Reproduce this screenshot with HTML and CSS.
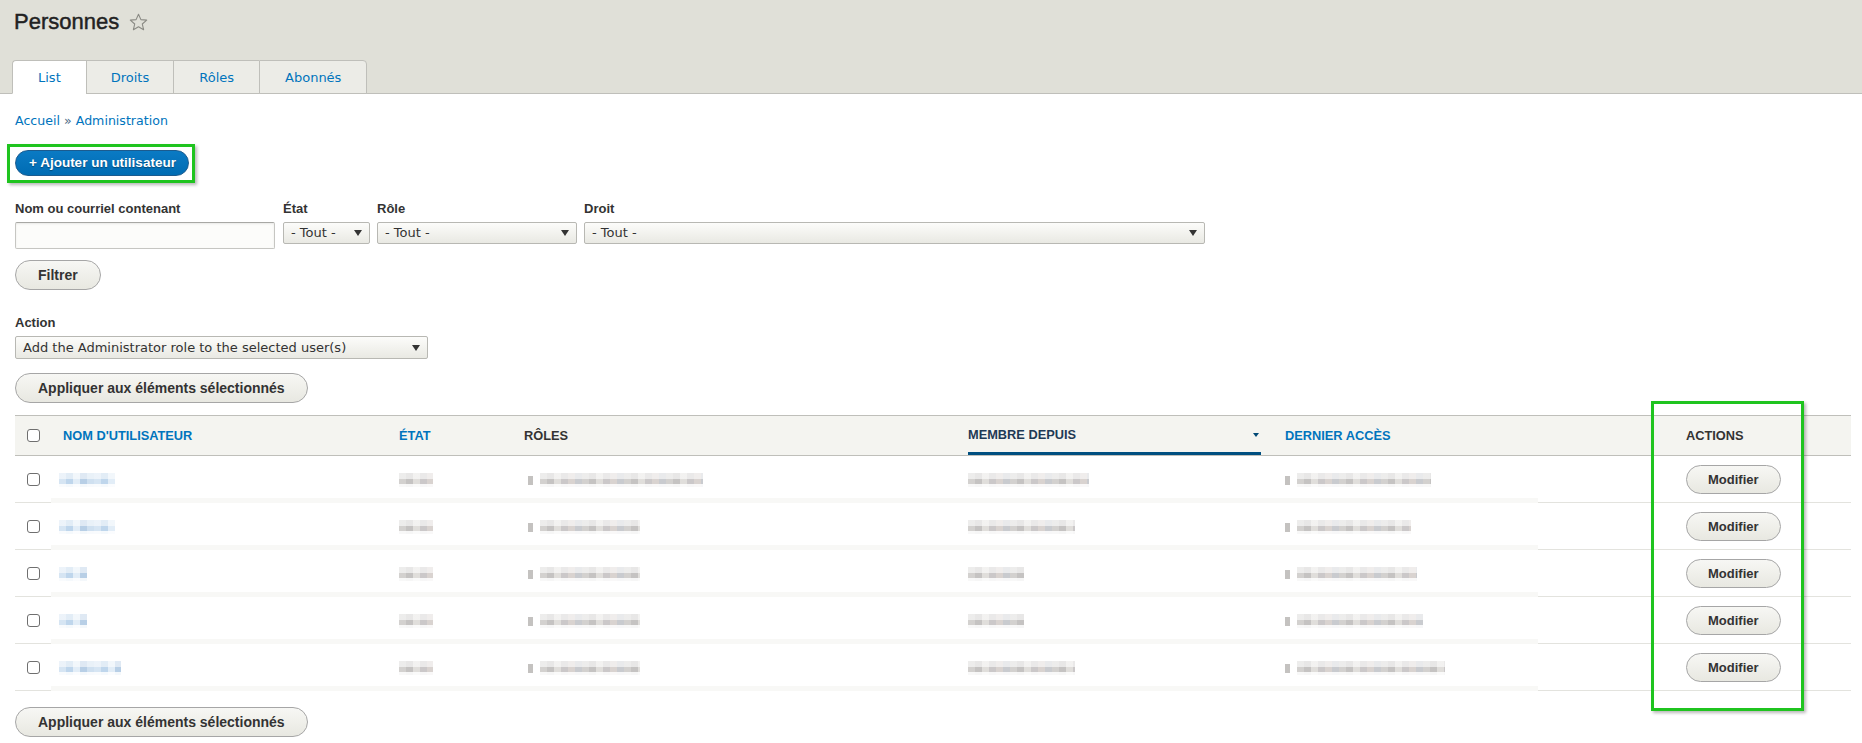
FILE: index.html
```html
<!DOCTYPE html>
<html lang="fr">
<head>
<meta charset="utf-8">
<title>Personnes</title>
<link rel="stylesheet" href="styles.css">
</head>
<body>
<header class="page-header">
  <h1 class="page-title"><span>Personnes</span>
    <svg class="star" width="19" height="18" viewBox="0 0 19 18" aria-hidden="true"><path d="M9.5 1.2 L11.9 6.6 L17.7 7.1 L13.3 11 L14.6 16.7 L9.5 13.7 L4.4 16.7 L5.7 11 L1.3 7.1 L7.1 6.6 Z" fill="none" stroke="#8a8a84" stroke-width="1.1" stroke-linejoin="round"/></svg>
  </h1>
  <ul class="tabs">
    <li class="tab is-active"><a href="#">List</a></li>
    <li class="tab"><a href="#">Droits</a></li>
    <li class="tab"><a href="#">Rôles</a></li>
    <li class="tab"><a href="#">Abonnés</a></li>
  </ul>
</header>

<main class="content">
  <nav class="breadcrumb"><a href="#">Accueil</a> <span class="sep">»</span> <a href="#">Administration</a></nav>

  <div class="action-links"><a href="#" class="button button--primary">+ Ajouter un utilisateur</a></div>

  <form class="filters">
    <div class="form-item">
      <label class="form-label">Nom ou courriel contenant</label>
      <input type="text" class="form-text">
    </div>
    <div class="form-item">
      <label class="form-label">État</label>
      <span class="select-wrap w-etat"><select class="form-select"><option>- Tout -</option></select></span>
    </div>
    <div class="form-item">
      <label class="form-label">Rôle</label>
      <span class="select-wrap w-role"><select class="form-select"><option>- Tout -</option></select></span>
    </div>
    <div class="form-item">
      <label class="form-label">Droit</label>
      <span class="select-wrap w-droit"><select class="form-select"><option>- Tout -</option></select></span>
    </div>
  </form>
  <div class="form-actions"><button type="button" class="button">Filtrer</button></div>

  <div class="bulk">
    <label class="form-label">Action</label>
    <span class="select-wrap w-action"><select class="form-select tall"><option>Add the Administrator role to the selected user(s)</option></select></span>
  </div>
  <div class="apply"><button type="button" class="button">Appliquer aux éléments sélectionnés</button></div>

  <table class="users">
    <colgroup>
      <col class="c-chk"><col class="c-name"><col class="c-etat"><col class="c-roles"><col class="c-membre"><col class="c-dernier"><col class="c-actions">
    </colgroup>
    <thead>
      <tr>
        <th class="chk"><input type="checkbox" class="cb"></th>
        <th><a href="#">Nom d'utilisateur</a></th>
        <th><a href="#">État</a></th>
        <th>Rôles</th>
        <th class="is-active"><a href="#" class="sort-link"><span>Membre depuis</span><span class="sort-arrow"></span></a></th>
        <th><a href="#">Dernier accès</a></th>
        <th>Actions</th>
      </tr>
    </thead>
    <tbody>
      <tr>
        <td class="chk"><input type="checkbox" class="cb"></td>
        <td class="mid"><span class="px px-blue name" style="width:56px"></span></td>
        <td class="mid"><span class="px px-gray" style="width:34px"></span></td>
        <td class="mid"><span class="dot roles-dot"></span><span class="px px-gray" style="width:163px"></span></td>
        <td class="mid"><span class="px px-gray" style="width:121px"></span></td>
        <td class="mid last"><span class="dot"></span><span class="px px-gray" style="width:134px"></span></td>
        <td class="act"><button type="button" class="button small">Modifier</button></td>
      </tr>
      <tr>
        <td class="chk"><input type="checkbox" class="cb"></td>
        <td class="mid"><span class="px px-blue name" style="width:56px"></span></td>
        <td class="mid"><span class="px px-gray" style="width:34px"></span></td>
        <td class="mid"><span class="dot roles-dot"></span><span class="px px-gray" style="width:100px"></span></td>
        <td class="mid"><span class="px px-gray" style="width:107px"></span></td>
        <td class="mid last"><span class="dot"></span><span class="px px-gray" style="width:114px"></span></td>
        <td class="act"><button type="button" class="button small">Modifier</button></td>
      </tr>
      <tr>
        <td class="chk"><input type="checkbox" class="cb"></td>
        <td class="mid"><span class="px px-blue name" style="width:28px"></span></td>
        <td class="mid"><span class="px px-gray" style="width:34px"></span></td>
        <td class="mid"><span class="dot roles-dot"></span><span class="px px-gray" style="width:100px"></span></td>
        <td class="mid"><span class="px px-gray" style="width:56px"></span></td>
        <td class="mid last"><span class="dot"></span><span class="px px-gray" style="width:120px"></span></td>
        <td class="act"><button type="button" class="button small">Modifier</button></td>
      </tr>
      <tr>
        <td class="chk"><input type="checkbox" class="cb"></td>
        <td class="mid"><span class="px px-blue name" style="width:28px"></span></td>
        <td class="mid"><span class="px px-gray" style="width:34px"></span></td>
        <td class="mid"><span class="dot roles-dot"></span><span class="px px-gray" style="width:100px"></span></td>
        <td class="mid"><span class="px px-gray" style="width:56px"></span></td>
        <td class="mid last"><span class="dot"></span><span class="px px-gray" style="width:126px"></span></td>
        <td class="act"><button type="button" class="button small">Modifier</button></td>
      </tr>
      <tr>
        <td class="chk"><input type="checkbox" class="cb"></td>
        <td class="mid"><span class="px px-blue name" style="width:62px"></span></td>
        <td class="mid"><span class="px px-gray" style="width:34px"></span></td>
        <td class="mid"><span class="dot roles-dot"></span><span class="px px-gray" style="width:100px"></span></td>
        <td class="mid"><span class="px px-gray" style="width:107px"></span></td>
        <td class="mid last"><span class="dot"></span><span class="px px-gray" style="width:148px"></span></td>
        <td class="act"><button type="button" class="button small">Modifier</button></td>
      </tr>
    </tbody>
  </table>

  <div class="apply bottom"><button type="button" class="button">Appliquer aux éléments sélectionnés</button></div>
</main>

<div class="highlight hl-add"></div>
<div class="highlight hl-actions"></div>
</body>
</html>
```

FILE: styles.css
```css
* { box-sizing: border-box; }
html, body { margin: 0; padding: 0; }
body {
  position: relative;
  width: 1862px;
  min-height: 743px;
  overflow: hidden;
  background: #fff;
  color: #333;
  font-family: "DejaVu Sans", Verdana, sans-serif;
  font-size: 13px;
}
a { color: #0074bd; text-decoration: none; }

/* Header */
.page-header {
  background: #e0e0d8;
  padding: 9px 0 0 12px;
  border-bottom: 1px solid #bfbfba;
}
.page-title {
  margin: 0 0 25px;
  padding-left: 2px;
  display: flex;
  align-items: center;
  gap: 10px;
  font-family: "Liberation Sans", Arial, sans-serif;
  font-weight: normal;
  font-size: 22px;
  line-height: 26px;
  color: #222;
  -webkit-text-stroke: 0.45px #222;
}
.star { display: block; margin-top: -1px; }

.tabs {
  display: flex;
  margin: 0;
  padding: 0;
  list-style: none;
}
.tab {
  height: 34px;
  margin-bottom: -1px;
  border: 1px solid #bfbfba;
  border-right: none;
  border-bottom: 1px solid #bfbfba;
  background: #ecece7;
}
.tab:first-child { border-radius: 4px 0 0 0; }
.tab:last-child { border-right: 1px solid #bfbfba; border-radius: 0 4px 0 0; }
.tab.is-active { background: #fff; border-bottom-color: #fff; }
.tab a {
  display: block;
  padding: 0 25px;
  line-height: 33px;
  font-size: 13px;
  color: #0074bd;
}
.tab:nth-child(2) a { padding: 0 24px; }

/* Content */
.content { padding: 0 11px 0 15px; }
.breadcrumb {
  margin-top: 18px;
  font-size: 12.6px;
  line-height: 18px;
}
.breadcrumb .sep { color: #4b6a86; }

.action-links { margin-top: 20px; }

.button {
  display: inline-block;
  border: 1px solid #a6a6a6;
  border-radius: 20em;
  background: linear-gradient(to bottom, #f7f7f4, #e8e8e1);
  color: #333;
  font-family: "Liberation Sans", Arial, sans-serif;
  font-weight: bold;
  font-size: 14px;
  line-height: 18px;
  padding: 5px 22px;
  cursor: pointer;
  text-align: center;
}
.button--primary {
  background: linear-gradient(to bottom, #0a7ac4, #006cb3);
  border-color: #1b5b8f;
  color: #fff;
  font-size: 13.5px;
  line-height: 16px;
  padding: 4px 12px 4px 13px;
  text-shadow: 0 1px 1px rgba(0,0,0,0.35);
}
.button.small {
  font-size: 13px;
  line-height: 17px;
  padding: 5px 21px;
}

/* Forms */
.filters {
  margin-top: 25px;
  display: flex;
  gap: 7px;
  align-items: flex-start;
}
.form-item { display: flex; flex-direction: column; }
.form-label {
  display: block;
  margin-bottom: 5px;
  font-family: "Liberation Sans", Arial, sans-serif;
  font-weight: bold;
  font-size: 13px;
  line-height: 16px;
  color: #333;
}
.form-text {
  width: 260px;
  height: 27px;
  margin-right: 1px;
  border: 1px solid #c6c6c2;
  border-top-color: #a8a8a4;
  border-radius: 2px;
  background: #fcfcfa;
  box-shadow: inset 0 1px 2px rgba(0,0,0,0.08);
}
.select-wrap {
  position: relative;
  display: block;
}
.select-wrap::after {
  content: "";
  position: absolute;
  right: 8px;
  top: 50%;
  margin-top: -3px;
  border-left: 4px solid transparent;
  border-right: 4px solid transparent;
  border-top: 6px solid #333;
  pointer-events: none;
}
.form-select {
  -webkit-appearance: none;
  appearance: none;
  display: block;
  width: 100%;
  height: 22px;
  padding: 0 24px 0 7px;
  border: 1px solid #b8b8b3;
  border-radius: 2px;
  background: linear-gradient(to bottom, #fcfcfa, #e9e9e3);
  color: #333;
  font-family: "DejaVu Sans", Verdana, sans-serif;
  font-size: 13px;
  line-height: 20px;
}
.form-select.tall { height: 23px; }
.w-etat { width: 87px; }
.w-role { width: 200px; }
.w-droit { width: 621px; }
.w-action { width: 413px; }

.form-actions { margin-top: 11px; }

.bulk { margin-top: 25px; }
.apply { margin-top: 14px; }
.apply.bottom { margin-top: 16px; }

/* Table */
.users {
  margin-top: 12px;
  width: 1836px;
  table-layout: fixed;
  border-collapse: separate;
  border-spacing: 0;
}
.c-chk { width: 36px; }
.c-name { width: 336px; }
.c-etat { width: 125px; }
.c-roles { width: 444px; }
.c-membre { width: 317px; }
.c-dernier { width: 401px; }
.c-actions { width: 177px; }

.users th {
  height: 41px;
  padding: 0 12px;
  background: #f4f4f0;
  border-top: 1px solid #bfbfba;
  border-bottom: 1px solid #bfbfba;
  text-align: left;
  vertical-align: middle;
  font-family: "Liberation Sans", Arial, sans-serif;
  font-weight: bold;
  font-size: 12.8px;
  text-transform: uppercase;
  color: #333;
  white-space: nowrap;
}
.users th a { color: #0074bd; }
.users th.is-active { vertical-align: bottom; }
.users th.is-active .sort-link {
  display: flex;
  align-items: center;
  justify-content: space-between;
  height: 39px;
  padding-top: 1px;
  border-bottom: 3px solid #004f80;
  color: #1f3a55;
}
.sort-arrow {
  width: 0;
  height: 0;
  margin-right: 2px;
  border-left: 3px solid transparent;
  border-right: 3px solid transparent;
  border-top: 4px solid #004875;
}
.users th.chk, .users td.chk { padding: 0 0 0 12px; }

.users td {
  height: 47px;
  padding: 0 12px;
  vertical-align: middle;
  white-space: nowrap;
}
.users td.chk, .users td.act {
  background: linear-gradient(#e3e3de, #e3e3de) left bottom / 100% 1px no-repeat;
}
.users td.mid {
  background: linear-gradient(#f8f8f6, #f8f8f6) left bottom / 100% 5px no-repeat;
}
.users td.mid.last {
  background:
    linear-gradient(to right, transparent 265px, #e3e3de 265px) left bottom / 100% 1px no-repeat,
    linear-gradient(to right, #f8f8f6 265px, transparent 265px) left bottom / 100% 5px no-repeat;
}

.cb {
  -webkit-appearance: none;
  appearance: none;
  display: block;
  margin: 0;
  width: 13px;
  height: 13px;
  border: 1px solid #6f6f6f;
  border-radius: 3px;
  background: #fff;
}

.px {
  display: inline-block;
  vertical-align: middle;
  height: 14px;
}
.px-blue {
  background-image:
    linear-gradient(to bottom, rgba(255,255,255,0.55) 0 6px, rgba(255,255,255,0) 6px 11px, rgba(255,255,255,0.85) 11px),
    repeating-linear-gradient(90deg, #d6e5f3 0 7px, #bfd6ec 7px 14px, #e2edf7 14px 21px, #b8cfe6 21px 28px, #cfe0f0 28px 35px);
}
.px-blue.name { margin-left: -4px; }
.px-gray {
  background-image:
    linear-gradient(to bottom, rgba(255,255,255,0.6) 0 6px, rgba(255,255,255,0) 6px 11px, rgba(255,255,255,0.85) 11px),
    repeating-linear-gradient(90deg, #d3d1cf 0 7px, #c5c3c2 7px 14px, #e0dedb 14px 21px, #cbc8c9 21px 28px, #d9d3d0 28px 35px, #c9cbcf 35px 42px);
}
.dot {
  display: inline-block;
  vertical-align: middle;
  width: 5px;
  height: 9px;
  margin-right: 7px;
  background: #c4c2c0;
}
.roles-dot { margin-left: 4px; }

/* Annotation highlights */
.highlight {
  position: absolute;
  border: 3px solid #1fc41f;
  box-shadow: 2px 2px 3px rgba(0,0,0,0.28);
  pointer-events: none;
}
.hl-add { left: 7px; top: 144px; width: 188px; height: 39px; }
.hl-actions { left: 1651px; top: 401px; width: 153px; height: 310px; }
```
